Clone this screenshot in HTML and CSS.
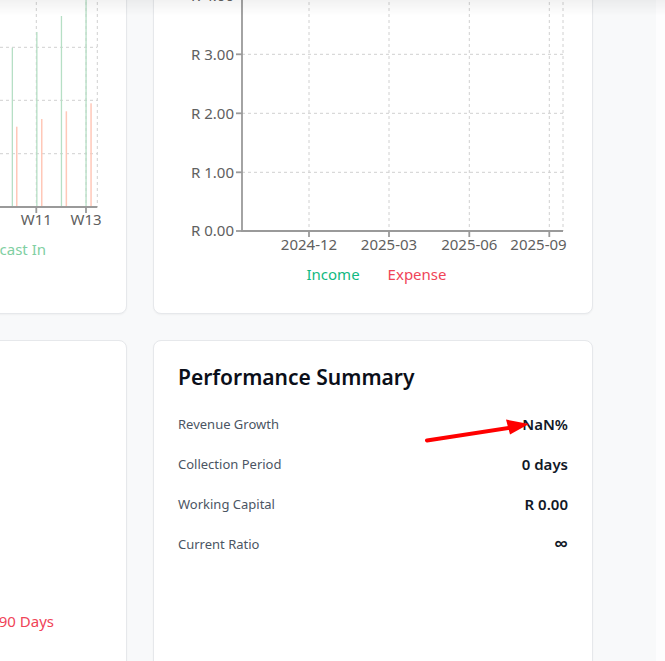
FILE: index.html
```html
<!DOCTYPE html>
<html lang="en">
<head>
<meta charset="utf-8">
<title>Dashboard</title>
<link rel="stylesheet" href="styles.css">
</head>
<body>
<div class="topshade"></div>
<main class="page">
  <div class="grid">
    <section class="card">
      <h3 class="card-title">Cash Flow Forecast</h3>
      <div class="chart-wrap">
        <svg class="chart" width="390" height="238" viewBox="-288 -10 390 238">
          <g class="grid-lines">
            <line x1="-240" y1="-6" x2="97.3" y2="-6"/>
            <line x1="-240" y1="47.3" x2="97.3" y2="47.3"/>
            <line x1="-240" y1="100.3" x2="97.3" y2="100.3"/>
            <line x1="-240" y1="153.7" x2="97.3" y2="153.7"/>
            <line x1="-214" y1="-10" x2="-214" y2="207"/>
            <line x1="-164" y1="-10" x2="-164" y2="207"/>
            <line x1="-114" y1="-10" x2="-114" y2="207"/>
            <line x1="-64" y1="-10" x2="-64" y2="207"/>
            <line x1="-14" y1="-10" x2="-14" y2="207"/>
            <line x1="36.3" y1="-10" x2="36.3" y2="207"/>
            <line x1="86" y1="-10" x2="86" y2="207"/>
            <line x1="97.3" y1="-10" x2="97.3" y2="207"/>
          </g>
          <g class="bars-in">
            <rect x="-39.5" y="70" width="1.3" height="137"/>
            <rect x="-14.5" y="60" width="1.3" height="147"/>
            <rect x="11.7" y="47.7" width="1.3" height="159.3"/>
            <rect x="36.2" y="32" width="1.3" height="175"/>
            <rect x="60.8" y="16" width="1.3" height="191"/>
            <rect x="85.4" y="-10" width="1.3" height="217"/>
          </g>
          <g class="bars-out">
            <rect x="-34" y="140" width="1.5" height="67"/>
            <rect x="-9" y="133" width="1.5" height="74"/>
            <rect x="16" y="126.7" width="1.5" height="80.3"/>
            <rect x="41" y="119" width="1.5" height="88"/>
            <rect x="65.6" y="111.3" width="1.5" height="95.7"/>
            <rect x="90.3" y="103.3" width="1.5" height="103.7"/>
          </g>
          <g class="axis">
            <line x1="-240" y1="207" x2="97.3" y2="207"/>
            <line x1="36.3" y1="207" x2="36.3" y2="213"/>
            <line x1="86" y1="207" x2="86" y2="213"/>
            <line x1="-14" y1="207" x2="-14" y2="213"/>
          </g>
          <g class="tick-text" text-anchor="middle">
            <text x="-14" y="225">W9</text>
            <text x="36.3" y="225">W11</text>
            <text x="86" y="225">W13</text>
          </g>
        </svg>
        <div class="legend legend-left">
          <span class="lg-actual-in">Actual In</span>
          <span class="lg-actual-out">Actual Out</span>
          <span class="lg-forecast-in">Forecast In</span>
        </div>
      </div>
    </section>

    <section class="card">
      <h3 class="card-title">Income vs Expenses</h3>
      <div class="chart-wrap">
        <svg class="chart" width="390" height="262" viewBox="178 -10 390 262">
          <g class="grid-lines">
            <line x1="242" y1="-4.7" x2="563" y2="-4.7"/>
            <line x1="242" y1="54.3" x2="563" y2="54.3"/>
            <line x1="242" y1="113.3" x2="563" y2="113.3"/>
            <line x1="242" y1="172.3" x2="563" y2="172.3"/>
            <line x1="309" y1="-10" x2="309" y2="231"/>
            <line x1="389" y1="-10" x2="389" y2="231"/>
            <line x1="469.3" y1="-10" x2="469.3" y2="231"/>
            <line x1="549.3" y1="-10" x2="549.3" y2="231"/>
            <line x1="563" y1="-10" x2="563" y2="231"/>
          </g>
          <g class="axis">
            <line x1="242" y1="-10" x2="242" y2="231"/>
            <line x1="241" y1="231" x2="563" y2="231"/>
            <line x1="236" y1="-4.7" x2="242" y2="-4.7"/>
            <line x1="236" y1="54.3" x2="242" y2="54.3"/>
            <line x1="236" y1="113.3" x2="242" y2="113.3"/>
            <line x1="236" y1="172.3" x2="242" y2="172.3"/>
            <line x1="236" y1="231" x2="242" y2="231"/>
            <line x1="309" y1="231" x2="309" y2="237"/>
            <line x1="389" y1="231" x2="389" y2="237"/>
            <line x1="469.3" y1="231" x2="469.3" y2="237"/>
            <line x1="549.3" y1="231" x2="549.3" y2="237"/>
          </g>
          <g class="tick-text" text-anchor="end">
            <text x="234" y="0.5">R 4.00</text>
            <text x="234" y="59.5">R 3.00</text>
            <text x="234" y="118.5">R 2.00</text>
            <text x="234" y="177.5">R 1.00</text>
            <text x="234" y="236.3">R 0.00</text>
          </g>
          <g class="tick-text" text-anchor="middle">
            <text x="309" y="250">2024-12</text>
            <text x="389" y="250">2025-03</text>
            <text x="469.3" y="250">2025-06</text>
            <text x="538.5" y="250">2025-09</text>
          </g>
        </svg>
        <div class="legend legend-right">
          <span class="lg-income">Income</span>
          <span class="lg-expense">Expense</span>
        </div>
      </div>
    </section>

    <section class="card card-tall">
      <h3 class="card-title">Receivables Aging</h3>
      <div class="aging-space"></div>
      <div class="legend legend-aging">
        <span class="lg-current">Current</span>
        <span class="lg-expense">&gt; 90 Days</span>
      </div>
    </section>

    <section class="card card-tall perf">
      <h3 class="perf-title">Performance Summary</h3>
      <div class="perf-list">
        <div class="perf-row"><span class="perf-label">Revenue Growth</span><span class="perf-value">NaN%</span></div>
        <div class="perf-row"><span class="perf-label">Collection Period</span><span class="perf-value">0 days</span></div>
        <div class="perf-row"><span class="perf-label">Working Capital</span><span class="perf-value">R 0.00</span></div>
        <div class="perf-row"><span class="perf-label">Current Ratio</span><span class="perf-value perf-infinity">∞</span></div>
      </div>
      <svg class="annotation" width="120" height="40" viewBox="268 76 120 40">
        <line x1="273" y1="99.5" x2="358" y2="86.5" class="arrow-line"/>
        <polygon points="352,78.5 375,83 356,93.5" class="arrow-head"/>
      </svg>
    </section>
  </div>
</main>
<div class="gutter"></div>
</body>
</html>
```
FILE: styles.css
```css
* { box-sizing: border-box; }

html, body {
  margin: 0;
  height: 100%;
}

body {
  display: flex;
  overflow: hidden;
  background: #fdfdfe;
  font-family: "Noto Sans", "Open Sans", sans-serif;
  color: #111827;
}

.topshade {
  position: fixed;
  top: 0;
  left: 0;
  right: 0;
  height: 16px;
  background: linear-gradient(rgba(0, 0, 0, 0.05), rgba(0, 0, 0, 0));
  pointer-events: none;
  z-index: 10;
}

.page {
  flex: 0 0 656px;
  background: #f8f9fa;
  overflow: hidden;
}

.gutter {
  flex: 1;
  background: #fdfdfe;
}

.grid {
  display: grid;
  grid-template-columns: 440px 440px;
  column-gap: 26px;
  row-gap: 26px;
  margin-left: -313px;
  margin-top: -79px;
}

.card {
  position: relative;
  background: #fff;
  border: 1px solid #e6e8eb;
  border-radius: 8px;
  box-shadow: 0 1px 2px rgba(0, 0, 0, 0.04);
  padding: 24px;
}

.card-title {
  margin: 0 0 16px;
  font-size: 18px;
  line-height: 28px;
  font-weight: 600;
}

.chart-wrap {
  height: 299px;
}

.chart {
  display: block;
  overflow: visible;
}

.grid-lines line {
  stroke: #d0d0d0;
  stroke-width: 1;
  stroke-dasharray: 3 3;
}

.axis line {
  stroke: #9a9a9a;
  stroke-width: 1.8;
}

.tick-text {
  font-family: "Noto Sans", "Open Sans", sans-serif;
  font-size: 15px;
  fill: #606060;
}

.bars-in rect { fill: #b6dfc5; }
.bars-out rect { fill: #ffc8b8; }

.legend {
  display: flex;
  gap: 28px;
  height: 20px;
  font-size: 15px;
  line-height: 20px;
}

.legend-left {
  margin-top: 11px;
  justify-content: flex-end;
  padding-right: 56px;
}

.legend-right {
  margin-top: 12px;
  justify-content: center;
  padding-left: 7px;
}

.lg-actual-in { color: #10b981; }
.lg-actual-out { color: #f97316; }
.lg-forecast-in { color: #80cfa2; }
.lg-income { color: #10b981; }
.lg-expense { color: #f04458; }
.lg-current { color: #10b981; }

.card-tall {
  min-height: 360px;
}

.aging-space {
  height: 202px;
}

.legend-aging {
  justify-content: flex-end;
  padding-right: 48px;
}

.perf-title {
  margin: 0 0 15px;
  font-size: 21px;
  line-height: 24px;
  font-weight: 600;
  color: #0b0f19;
}

.perf-list {
  display: flex;
  flex-direction: column;
}

.perf-row {
  display: flex;
  justify-content: space-between;
  align-items: center;
  height: 40px;
}

.perf-label {
  font-size: 13px;
  color: #4b5563;
}

.perf-value {
  font-size: 15px;
  font-weight: 600;
  color: #111827;
}

.perf-infinity {
  font-size: 20px;
  line-height: 20px;
}

.annotation {
  position: absolute;
  left: 268px;
  top: 76px;
  overflow: visible;
}

.arrow-line {
  stroke: #ff0000;
  stroke-width: 4;
  stroke-linecap: round;
}

.arrow-head {
  fill: #ff0000;
}
```
